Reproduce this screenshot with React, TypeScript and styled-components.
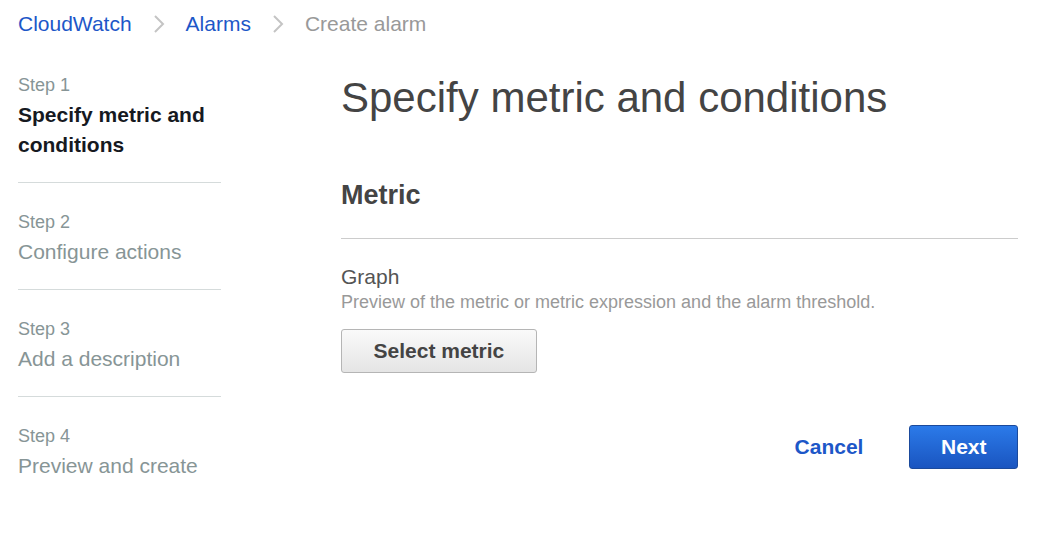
import styled, { createGlobalStyle } from "styled-components";

const GlobalStyle = createGlobalStyle`
  body {
    margin: 0;
    background: #ffffff;
    font-family: "Liberation Sans", Arial, sans-serif;
  }
`;

const steps = [
  { label: "Step 1", title: "Specify metric and conditions" },
  { label: "Step 2", title: "Configure actions" },
  { label: "Step 3", title: "Add a description" },
  { label: "Step 4", title: "Preview and create" },
];

const Chevron = () => (
  <svg width="14" height="20" viewBox="0 0 14 20" fill="none">
    <path d="M3 2l8 8-8 8" stroke="#c4c4c4" strokeWidth="2" />
  </svg>
);

const App = () => {
  return (
    <Page>
      <GlobalStyle />
      <Breadcrumbs>
        <Crumb>CloudWatch</Crumb>
        <Chevron />
        <Crumb>Alarms</Crumb>
        <Chevron />
        <Crumb $current>Create alarm</Crumb>
      </Breadcrumbs>
      <Layout>
        <Sidebar>
          {steps.map((step, index) => (
            <Step key={step.label} $first={index === 0} $last={index === steps.length - 1}>
              <StepLabel>{step.label}</StepLabel>
              <StepTitle $active={index === 0}>{step.title}</StepTitle>
            </Step>
          ))}
        </Sidebar>
        <Main>
          <PageTitle>Specify metric and conditions</PageTitle>
          <Panel>
            <PanelHeader>Metric</PanelHeader>
            <PanelBody>
              <FieldLabel>Graph</FieldLabel>
              <FieldHint>
                Preview of the metric or metric expression and the alarm threshold.
              </FieldHint>
              <SecondaryButton>Select metric</SecondaryButton>
            </PanelBody>
          </Panel>
          <Actions>
            <LinkButton>Cancel</LinkButton>
            <PrimaryButton>Next</PrimaryButton>
          </Actions>
        </Main>
      </Layout>
    </Page>
  );
};

export default App;

const Page = styled.div`
  padding: 0 20px 0 18px;
`;

const Breadcrumbs = styled.nav`
  display: flex;
  align-items: center;
  gap: 20px;
  padding-top: 12px;
  height: 24px;
`;

const Crumb = styled.span<{ $current?: boolean }>`
  font-size: 21px;
  line-height: 24px;
  color: ${(p) => (p.$current ? "#999999" : "#1d57c8")};
`;

const Layout = styled.div`
  display: grid;
  grid-template-columns: 203px 1fr;
  column-gap: 120px;
  margin-top: 37px;
`;

const Sidebar = styled.div`
  display: flex;
  flex-direction: column;
  padding-top: 1px;
`;

const Step = styled.div<{ $first: boolean; $last: boolean }>`
  padding-top: ${(p) => (p.$first ? "0" : "28px")};
  padding-bottom: 22px;
  border-bottom: ${(p) => (p.$last ? "none" : "1px solid #d5dbdb")};
`;

const StepLabel = styled.div`
  font-size: 18px;
  line-height: 22px;
  color: #879596;
`;

const StepTitle = styled.div<{ $active: boolean }>`
  margin-top: 4px;
  font-size: 21px;
  line-height: 30px;
  font-weight: ${(p) => (p.$active ? 700 : 400)};
  color: ${(p) => (p.$active ? "#16191f" : "#879596")};
`;

const Main = styled.div`
  display: flex;
  flex-direction: column;
`;

const PageTitle = styled.h1`
  margin: 0;
  font-size: 42px;
  line-height: 50px;
  font-weight: 400;
  color: #444444;
`;

const Panel = styled.section`
  margin-top: 56px;
`;

const PanelHeader = styled.h2`
  margin: 0;
  padding-bottom: 27px;
  font-size: 27px;
  line-height: 32px;
  font-weight: 700;
  color: #444444;
  border-bottom: 1px solid #cccccc;
`;

const PanelBody = styled.div`
  display: flex;
  flex-direction: column;
  align-items: flex-start;
  padding-top: 26px;
`;

const FieldLabel = styled.div`
  font-size: 21px;
  line-height: 24px;
  color: #545454;
`;

const FieldHint = styled.div`
  margin-top: 2px;
  font-size: 18px;
  line-height: 22px;
  color: #999999;
`;

const SecondaryButton = styled.button`
  margin-top: 16px;
  height: 44px;
  padding: 0 31.5px;
  border: 1px solid #b5b5b5;
  border-radius: 3px;
  background: linear-gradient(#fafafa, #e5e5e5);
  font-family: inherit;
  font-size: 21px;
  font-weight: 700;
  color: #444444;
`;

const Actions = styled.div`
  display: flex;
  justify-content: flex-end;
  align-items: center;
  gap: 46px;
  margin-top: 52px;
`;

const LinkButton = styled.button`
  border: none;
  background: none;
  padding: 0;
  font-family: inherit;
  font-size: 21px;
  font-weight: 700;
  color: #1d57c8;
`;

const PrimaryButton = styled.button`
  height: 44px;
  padding: 0 30.5px;
  border: 1px solid #1b4a9c;
  border-radius: 3px;
  background: linear-gradient(#2b7ae9, #1a55c0);
  font-family: inherit;
  font-size: 21px;
  font-weight: 700;
  color: #ffffff;
`;
